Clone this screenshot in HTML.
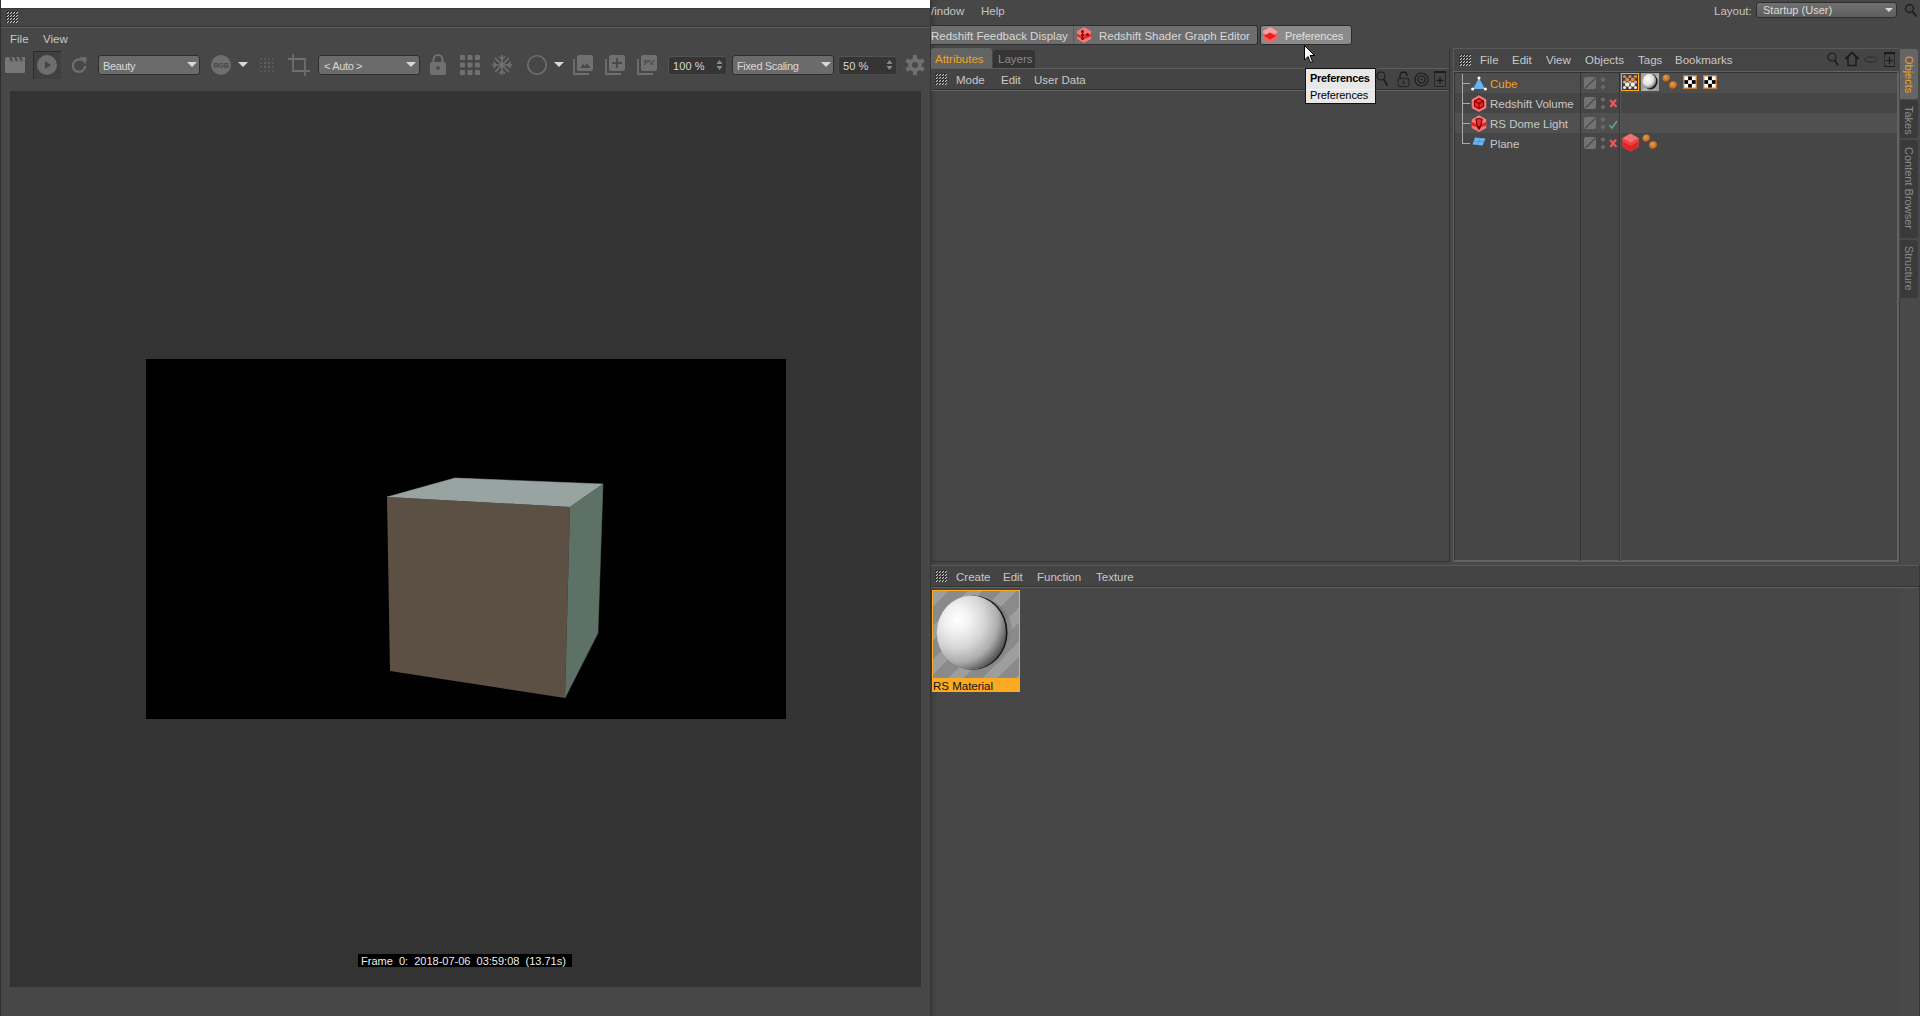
<!DOCTYPE html>
<html><head><meta charset="utf-8">
<style>
*{margin:0;padding:0;box-sizing:border-box}
html,body{width:1920px;height:1016px;overflow:hidden;background:#484848;font-family:"Liberation Sans",sans-serif;font-size:11px;color:#c8c8c8}
.a{position:absolute}
.t{position:absolute;white-space:nowrap;line-height:14px;font-size:11.5px;letter-spacing:0}
.s{font-size:11px;line-height:13px;letter-spacing:-0.35px}

.hl{position:absolute;height:1px}
.vl{position:absolute;width:1px}
.dd{position:absolute;border-radius:3px;background:#6b6b6b;border:1px solid #2e2e2e}
.tri{position:absolute;width:0;height:0;border-left:5px solid transparent;border-right:5px solid transparent;border-top:5px solid #d8d8d8}
.fld{position:absolute;border-radius:3px;background:#353535;border:1px solid #525252;border-right-color:#4a4a4a;border-bottom-color:#4c4c4c}
svg{position:absolute;overflow:visible}
</style></head><body>
<svg width="0" height="0" style="position:absolute"><defs><pattern id="gp" width="3" height="3" patternUnits="userSpaceOnUse"><rect x="1" y="0" width="1" height="1" fill="#1c1c1c"/><rect x="0" y="1" width="1" height="1" fill="#1c1c1c"/><rect x="1" y="1" width="1" height="1" fill="#5a5a5a"/><rect x="2" y="1" width="1" height="1" fill="#c8c8c8"/><rect x="1" y="2" width="1" height="1" fill="#c8c8c8"/></pattern></defs></svg>

<!-- ============ RIGHT MAIN WINDOW ============ -->
<div class="a" style="left:930px;top:0;width:990px;height:1016px;background:#474747"></div>
<div class="a" style="left:931px;top:0;width:6px;height:1016px;background:linear-gradient(90deg,#3b3b3b,#474747)"></div>
<div class="vl" style="left:930px;top:0;height:1016px;background:#3c3c3c"></div>
<!-- menu row -->
<div class="t" style="left:931px;top:4px;color:#c4c4c4">/indow</div>
<div class="t" style="left:981px;top:4px;color:#c4c4c4">Help</div>
<div class="t" style="left:1714px;top:4px;color:#c4c4c4">Layout:</div>
<div class="a" style="left:1756px;top:2px;width:141px;height:16px;border-radius:3px;background:linear-gradient(#707070,#5e5e5e);border:1px solid #2e2e2e"></div>
<div class="t s" style="left:1763px;top:4px;color:#dcdcdc;letter-spacing:0">Startup (User)</div>
<div class="tri" style="left:1885px;top:8px;border-left-width:4px;border-right-width:4px;border-top-width:4px"></div>
<svg style="left:1904px;top:3px" width="14" height="15" viewBox="0 0 14 15"><circle cx="5.5" cy="5.5" r="4" fill="none" stroke="#1c1c1c" stroke-width="1.3"/><path d="M8.5 8.5 L12.5 13.5" stroke="#1c1c1c" stroke-width="1.8"/></svg>

<!-- plugin toolbar -->
<div class="a" style="left:931px;top:25px;width:327px;height:20px;background:#6d6d6d;border-radius:0 3px 3px 0;border:1px solid #2e2e2e;border-left:0"></div>
<div class="vl" style="left:1073px;top:26px;height:18px;background:#5a5a5a"></div>
<div class="t" style="left:931px;top:29px;color:#d8d8d8">Redshift Feedback Display</div>
<svg style="left:1077px;top:27px" width="14" height="16" viewBox="0 0 14 16"><path d="M7 0 L14 4 V12 L7 16 L0 12 V4 Z" fill="#f07a7a"/><path d="M0 7 L7 9.5 L14 7 V9.5 L7 12 L0 9.5Z" fill="#e82424"/><g fill="#8a0000"><circle cx="5.5" cy="4.5" r="1.5"/><circle cx="5.5" cy="8" r="1.5"/><circle cx="10.5" cy="7.5" r="1.5"/><circle cx="5.5" cy="11.5" r="1.5"/></g><path d="M5.5 4.5 V11.5 M5.5 8 H10.5" stroke="#a00000" stroke-width="0.9"/></svg>
<div class="t" style="left:1099px;top:29px;color:#d8d8d8">Redshift Shader Graph Editor</div>
<div class="a" style="left:1260px;top:25px;width:92px;height:20px;background:#8a8a8a;border-radius:3px;border:1px solid #2a2a2a"></div>
<svg style="left:1263px;top:27px" width="14" height="16" viewBox="0 0 14 16"><path d="M7 0 L14 4 V12 L7 16 L0 12 V4 Z" fill="#ee6464"/><path d="M7 0 L14 4 V6 L7 9 L0 6 V4Z" fill="#f5a0a0"/><path d="M1 9 L7 5.5 L13 9 L7 12.5Z" fill="#ec1c1c"/></svg>
<div class="t s" style="left:1285px;top:30px;color:#e0e0e0;letter-spacing:-0.1px">Preferences</div>

<!-- Attributes panel -->
<div class="a" style="left:931px;top:48px;width:61px;height:21px;background:#636363;border-radius:3px 3px 0 0"></div>
<div class="t" style="left:935px;top:52px;color:#f0a21e">Attributes</div>
<div class="a" style="left:993px;top:50px;width:42px;height:19px;background:#343434;border-radius:3px 3px 0 0"></div>
<div class="t" style="left:998px;top:52px;color:#8a8a8a">Layers</div>
<div class="hl" style="left:931px;top:68px;width:518px;background:#5c5c5c"></div>
<div class="a" style="left:931px;top:69px;width:518px;height:20px;background:#444"></div>
<div class="hl" style="left:931px;top:89px;width:518px;background:#333"></div>
<div class="hl" style="left:931px;top:90px;width:518px;background:#616161"></div>
<svg class="grip" style="left:935px;top:73px" width="12" height="12"><rect width="12" height="12" fill="url(#gp)"/></svg>
<div class="t" style="left:956px;top:73px">Mode</div>
<div class="t" style="left:1001px;top:73px">Edit</div>
<div class="t" style="left:1034px;top:73px">User Data</div>
<div class="vl" style="left:1449px;top:48px;height:514px;background:#333"></div>
<div class="hl" style="left:931px;top:561px;width:519px;background:#333"></div>
<!-- attr icons -->
<svg style="left:1376px;top:71px" width="12" height="16" viewBox="0 0 12 16"><circle cx="5" cy="5" r="4" fill="none" stroke="#1c1c1c" stroke-width="1.2"/><path d="M7.5 8 L11.5 14.5" stroke="#1c1c1c" stroke-width="1.6"/></svg>
<svg style="left:1397px;top:71px" width="13" height="16" viewBox="0 0 13 16"><path d="M3 7 V4.5 A3.5 3.5 0 0 1 10 4.5 V5" fill="none" stroke="#1c1c1c" stroke-width="1.5"/><rect x="1" y="7.5" width="11" height="8" rx="1.5" fill="none" stroke="#2a2a2a" stroke-width="1.3"/><path d="M6.5 10 v3" stroke="#1c1c1c" stroke-width="1.5"/></svg>
<svg style="left:1414px;top:72px" width="15" height="15" viewBox="0 0 15 15"><circle cx="7.5" cy="7.5" r="6.5" fill="none" stroke="#1c1c1c" stroke-width="1.2"/><circle cx="7.5" cy="7.5" r="3.5" fill="none" stroke="#1c1c1c" stroke-width="1.2"/><circle cx="7.5" cy="7.5" r="1" fill="#1c1c1c"/></svg>
<svg style="left:1434px;top:71px" width="12" height="16" viewBox="0 0 12 16"><rect x="0.5" y="0.5" width="11" height="15" fill="none" stroke="#2a2a2a" stroke-width="1"/><rect x="0" y="0" width="12" height="2" fill="#1c1c1c"/><path d="M6 6 v7 M2.5 9.5 h7" stroke="#1c1c1c" stroke-width="1.3"/></svg>

<!-- Object manager -->
<div class="a" style="left:1453px;top:48px;width:446px;height:24px;background:#454545;border-top:1px solid #5a5a5a;border-left:1px solid #5a5a5a"></div>
<svg class="grip" style="left:1459px;top:54px" width="12" height="12"><rect width="12" height="12" fill="url(#gp)"/></svg>
<div class="t" style="left:1480px;top:53px">File</div>
<div class="t" style="left:1512px;top:53px">Edit</div>
<div class="t" style="left:1546px;top:53px">View</div>
<div class="t" style="left:1585px;top:53px">Objects</div>
<div class="t" style="left:1638px;top:53px">Tags</div>
<div class="t" style="left:1675px;top:53px">Bookmarks</div>
<svg style="left:1827px;top:52px" width="12" height="15" viewBox="0 0 12 15"><circle cx="5" cy="5" r="4" fill="none" stroke="#1c1c1c" stroke-width="1.2"/><path d="M7.5 8 L11 13.5" stroke="#1c1c1c" stroke-width="1.6"/></svg>
<svg style="left:1844px;top:51px" width="16" height="16" viewBox="0 0 16 16"><path d="M1.5 8 L8 1.5 L14.5 8" fill="none" stroke="#1c1c1c" stroke-width="1.8"/><path d="M4 6 V14.5 H12 V6" fill="none" stroke="#1c1c1c" stroke-width="1.5"/></svg>
<svg style="left:1864px;top:56px" width="14" height="7" viewBox="0 0 14 7"><ellipse cx="7" cy="3.5" rx="6.2" ry="2.6" fill="none" stroke="#2a2a2a" stroke-width="1"/></svg>
<svg style="left:1884px;top:52px" width="11" height="15" viewBox="0 0 11 15"><rect x="0.5" y="0.5" width="10" height="14" fill="none" stroke="#2e2e2e" stroke-width="1"/><rect x="0" y="0" width="11" height="2.2" fill="#1c1c1c"/><rect x="0" y="14" width="11" height="1" fill="#1c1c1c"/><path d="M5.5 5 V12 M2 8.5 H9" stroke="#1c1c1c" stroke-width="1.2"/></svg>
<!-- list frame -->
<div class="a" style="left:1453px;top:71px;width:446px;height:491px;background:#626262"></div>
<div class="a" style="left:1454px;top:72px;width:444px;height:489px;background:#464646;border:1px solid #626262;border-top-color:#333;border-left-color:#333"></div>
<div class="a" style="left:1455px;top:73px;width:442px;height:20px;background:#4e4e4e"></div>
<div class="a" style="left:1455px;top:113px;width:442px;height:20px;background:#505050"></div>
<div class="vl" style="left:1580px;top:73px;height:488px;background:#333"></div>
<div class="vl" style="left:1619px;top:73px;height:488px;background:#333"></div>
<div class="vl" style="left:1620px;top:73px;height:488px;background:#585858"></div>
<!-- tree -->
<div class="vl" style="left:1462px;top:74px;height:70px;background:#a8a8a8"></div>
<div class="hl" style="left:1462px;top:83px;width:8px;background:#a8a8a8"></div>
<div class="hl" style="left:1462px;top:103px;width:8px;background:#a8a8a8"></div>
<div class="hl" style="left:1462px;top:123px;width:8px;background:#a8a8a8"></div>
<div class="hl" style="left:1462px;top:143px;width:8px;background:#a8a8a8"></div>
<svg style="left:1471px;top:76px" width="16" height="15" viewBox="0 0 16 15"><path d="M8 2 L14 13 H2 Z" fill="#6ab4f0"/><circle cx="8" cy="2" r="1.5" fill="#fff"/><circle cx="1.6" cy="13" r="1.5" fill="#fff"/><circle cx="14.4" cy="13" r="1.5" fill="#fff"/></svg>
<div class="t" style="left:1490px;top:77px;color:#f0a21e">Cube</div>
<svg style="left:1471px;top:95px" width="16" height="18" viewBox="0 0 16 18"><path d="M8 0.3 L15.3 4.4 V12.9 L8 17 L0.7 12.9 V4.4 Z" fill="#f27a7a"/><path d="M8 3.5 L12.5 6 V11.2 L8 13.8 L3.5 11.2 V6 Z" fill="#e42a2a" stroke="#8a0000" stroke-width="1.2" stroke-linejoin="round"/><path d="M3.8 6.2 L8 8.5 L12.2 6.2 M8 8.5 V13.5" fill="none" stroke="#8a0000" stroke-width="1.2"/></svg>
<div class="t" style="left:1490px;top:97px;color:#c8c8c8">Redshift Volume</div>
<svg style="left:1471px;top:115px" width="16" height="18" viewBox="0 0 16 18"><path d="M8 0.3 L15.3 4.4 V12.9 L8 17 L0.7 12.9 V4.4 Z" fill="#f27a7a"/><path d="M0.7 7 L8 9.5 L15.3 7 V10.5 L8 13 L0.7 10.5Z" fill="#e82222"/><path d="M5 4.5 Q8 2.5 11 4.5 Q10.5 9 8.5 14 L7.5 14 Q5.5 9 5 4.5Z" fill="#e43030" stroke="#7a0000" stroke-width="1.2"/><path d="M7 11 L9 11 L8.5 14.5 L7.5 14.5Z" fill="#6a0000"/></svg>
<div class="t" style="left:1490px;top:117px;color:#c8c8c8">RS Dome Light</div>
<svg style="left:1472px;top:137px" width="14" height="9" viewBox="0 0 14 9"><path d="M3 0.5 L13.5 1.5 L10.5 8.5 L0.5 7.5 Z" fill="#6ab4f0"/><path d="M1.8 4 L12 5 M8 1 L5.5 8" stroke="#4a8ac8" stroke-width="0.7"/></svg>
<div class="t" style="left:1490px;top:137px;color:#c8c8c8">Plane</div>
<!-- layer/vis column -->
<svg style="left:1584px;top:77px" width="34" height="74" viewBox="0 0 34 74">
<g fill="#727272">
<rect x="0" y="0" width="12" height="12" rx="2"/><rect x="0" y="20" width="12" height="12" rx="2"/><rect x="0" y="40" width="12" height="12" rx="2"/><rect x="0" y="60" width="12" height="12" rx="2"/>
</g>
<g fill="#6a6a6a">
<path d="M19 0 l2.6 2.6 l-2.6 2.6 l-2.6 -2.6z M19 7.5 l2.6 2.6 l-2.6 2.6 l-2.6 -2.6z M19 20 l2.6 2.6 l-2.6 2.6 l-2.6 -2.6z M19 27.5 l2.6 2.6 l-2.6 2.6 l-2.6 -2.6z M19 40 l2.6 2.6 l-2.6 2.6 l-2.6 -2.6z M19 47.5 l2.6 2.6 l-2.6 2.6 l-2.6 -2.6z M19 60 l2.6 2.6 l-2.6 2.6 l-2.6 -2.6z M19 67.5 l2.6 2.6 l-2.6 2.6 l-2.6 -2.6z"/>
</g>
<g stroke="#4c4c4c" stroke-width="1.3"><path d="M1.5 11 L11 1.5 M1.5 31 L11 21.5 M1.5 51 L11 41.5 M1.5 71 L11 61.5"/></g>
<g stroke="#e85a5a" stroke-width="2.2"><path d="M26 23 L32.5 30 M32 22.5 L26.5 30 M26 63 L32.5 70 M32 62.5 L26.5 70"/></g>
<path d="M25.5 48 L28 51 L33 44" fill="none" stroke="#5aa890" stroke-width="1.5"/>
</svg>
<!-- tags -->
<div class="a" style="left:1621px;top:73px;width:18px;height:18px;border:1px solid #ffa810;background:#3a3f4c"></div>
<svg style="left:1622px;top:74px" width="16" height="16" viewBox="0 0 16 16"><g fill="#e88a3a"><circle cx="2.5" cy="2.5" r="1.6"/><circle cx="8" cy="2.5" r="1.6"/><circle cx="13.5" cy="2.5" r="1.6"/><circle cx="5.2" cy="5.5" r="2"/><circle cx="10.8" cy="5.5" r="2"/></g><g fill="#e8b090"><circle cx="2.5" cy="8" r="1.5"/><circle cx="8" cy="8" r="1.5"/><circle cx="13.5" cy="8" r="1.5"/></g><g fill="#f0eee0"><circle cx="5.2" cy="10.5" r="2.2"/><circle cx="10.8" cy="10.5" r="2.2"/><circle cx="2.5" cy="13.5" r="1.5"/><circle cx="8" cy="13.5" r="1.5"/><circle cx="13.5" cy="13.5" r="1.5"/></g></svg>
<svg style="left:1641px;top:73px" width="18" height="18" viewBox="0 0 18 18"><defs><radialGradient id="tsph" cx="0.35" cy="0.35" r="0.7"><stop offset="0" stop-color="#fff"/><stop offset="0.6" stop-color="#ddd"/><stop offset="0.85" stop-color="#888"/><stop offset="1" stop-color="#111"/></radialGradient></defs><rect width="18" height="18" fill="#a0a0a0"/><path d="M0 18 L18 0 V6 L6 18Z" fill="#b4b4b4"/><ellipse cx="9.3" cy="8.6" rx="7.3" ry="7.8" fill="#111"/><ellipse cx="8.6" cy="8.3" rx="7" ry="7.5" fill="url(#tsph)"/></svg>
<svg style="left:1662px;top:74px" width="16" height="16" viewBox="0 0 16 16"><defs><radialGradient id="ball" cx="0.4" cy="0.35" r="0.65"><stop offset="0" stop-color="#e8a050"/><stop offset="0.7" stop-color="#c07028"/><stop offset="1" stop-color="#6a3a10"/></radialGradient></defs><circle cx="4.5" cy="4.4" r="3.9" fill="url(#ball)"/><circle cx="11.3" cy="11.4" r="4.1" fill="url(#ball)"/></svg>
<svg style="left:1683px;top:75px" width="14" height="14" viewBox="0 0 15 15"><rect width="15" height="15" fill="#c87a36"/><rect x="1.5" y="1.5" width="12" height="12" fill="#fff"/><g fill="#000"><rect x="5.5" y="1.5" width="4" height="4"/><rect x="1.5" y="5.5" width="4" height="4"/><rect x="9.5" y="5.5" width="4" height="4"/><rect x="5.5" y="9.5" width="4" height="4"/></g></svg>
<svg style="left:1703px;top:75px" width="14" height="14" viewBox="0 0 15 15"><rect width="15" height="15" fill="#c87a36"/><rect x="1.5" y="1.5" width="12" height="12" fill="#fff"/><g fill="#000"><rect x="5.5" y="1.5" width="4" height="4"/><rect x="1.5" y="5.5" width="4" height="4"/><rect x="9.5" y="5.5" width="4" height="4"/><rect x="5.5" y="9.5" width="4" height="4"/></g></svg>
<svg style="left:1622px;top:133px" width="17" height="19" viewBox="0 0 17 19"><path d="M8.5 0.5 L16.5 5 V14 L8.5 18.5 L0.5 14 V5 Z" fill="#f07070"/><path d="M0.5 8 L8.5 12.5 L16.5 8 V14 L8.5 18.5 L0.5 14Z" fill="#e02424"/><path d="M0.5 5 L8.5 9.5 L16.5 5 V8 L8.5 12.5 L0.5 8Z" fill="#f04040"/></svg>
<svg style="left:1642px;top:134px" width="16" height="16" viewBox="0 0 16 16"><circle cx="4.5" cy="4.4" r="3.9" fill="url(#ball)"/><circle cx="11.3" cy="11.4" r="4.1" fill="url(#ball)"/></svg>

<!-- tabs -->
<div class="a" style="left:1899px;top:48px;width:21px;height:968px;background:#494949"></div>
<div class="a" style="left:1900px;top:49px;width:18px;height:50px;background:#656565;border-radius:0 3px 3px 0"></div>
<div class="a" style="left:1900px;top:100px;width:18px;height:38px;background:#3a3a3a;border-radius:0 3px 3px 0"></div>
<div class="a" style="left:1900px;top:140px;width:18px;height:98px;background:#3a3a3a;border-radius:0 3px 3px 0"></div>
<div class="a" style="left:1900px;top:240px;width:18px;height:58px;background:#3a3a3a;border-radius:0 3px 3px 0"></div>
<div class="t" style="left:1902px;top:56px;writing-mode:vertical-rl;color:#f0a21e;font-size:11px;line-height:13px">Objects</div>
<div class="t" style="left:1902px;top:106px;writing-mode:vertical-rl;color:#8c8c8c;font-size:11px;line-height:13px">Takes</div>
<div class="t" style="left:1902px;top:147px;writing-mode:vertical-rl;color:#8c8c8c;font-size:11px;line-height:13px">Content Browser</div>
<div class="t" style="left:1902px;top:246px;writing-mode:vertical-rl;color:#8c8c8c;font-size:11px;line-height:13px">Structure</div>

<div class="vl" style="left:1899px;top:298px;height:264px;background:#383838"></div>
<!-- Material manager -->
<div class="hl" style="left:931px;top:565px;width:989px;background:#5a5a5a"></div>
<div class="a" style="left:931px;top:566px;width:989px;height:20px;background:#444"></div>
<div class="hl" style="left:931px;top:586px;width:989px;background:#333"></div>
<div class="hl" style="left:931px;top:587px;width:989px;background:#616161"></div>
<svg class="grip" style="left:935px;top:570px" width="12" height="12"><rect width="12" height="12" fill="url(#gp)"/></svg>
<div class="t" style="left:956px;top:570px">Create</div>
<div class="t" style="left:1003px;top:570px">Edit</div>
<div class="t" style="left:1037px;top:570px">Function</div>
<div class="t" style="left:1096px;top:570px">Texture</div>
<div class="a" style="left:932px;top:590px;width:88px;height:102px;background:#fcaa22"></div>
<svg style="left:933px;top:591px" width="86" height="87" viewBox="933 591 86 87">
<defs>
<linearGradient id="stp" x1="933" y1="591" x2="950" y2="608" gradientUnits="userSpaceOnUse" spreadMethod="repeat">
<stop offset="0" stop-color="#9e9e9e"/><stop offset="0.45" stop-color="#9e9e9e"/><stop offset="0.45" stop-color="#8a8a8a"/><stop offset="1" stop-color="#8a8a8a"/>
</linearGradient>
<radialGradient id="sph" cx="0.3" cy="0.32" r="0.78">
<stop offset="0" stop-color="#ffffff"/><stop offset="0.22" stop-color="#f2f2f2"/><stop offset="0.5" stop-color="#d6d6d6"/><stop offset="0.75" stop-color="#acacac"/><stop offset="0.9" stop-color="#6e6e6e"/><stop offset="1" stop-color="#444"/>
</radialGradient>
<radialGradient id="shd" cx="0.35" cy="0.4" r="0.7">
<stop offset="0.6" stop-color="#4a4a4a"/><stop offset="1" stop-color="#9a9a9a"/>
</radialGradient>
</defs>
<rect x="933" y="591" width="86" height="87" fill="url(#stp)"/>
<ellipse cx="976" cy="634" rx="37" ry="37" fill="url(#shd)" opacity="0.6"/>
<ellipse cx="973" cy="632.5" rx="34.5" ry="37" fill="#111"/>
<ellipse cx="971.4" cy="632.6" rx="34.6" ry="37" fill="url(#sph)"/>
</svg>
<div class="t" style="left:933px;top:679px;color:#111">RS Material</div>

<div class="vl" style="left:1919px;top:565px;height:451px;background:#353535"></div>
<!-- tooltip + cursor -->
<div class="a" style="left:1305px;top:68px;width:71px;height:36px;background:#e8e8e8;border:1px solid #111"></div>
<div class="t" style="left:1310px;top:71px;color:#000;font-weight:bold;font-size:11px;letter-spacing:-0.3px">Preferences</div>
<div class="hl" style="left:1306px;top:89px;width:69px;background:#f4f4f4"></div>
<div class="t" style="left:1310px;top:88px;color:#000;font-size:11px;letter-spacing:-0.1px">Preferences</div>
<svg style="left:1304px;top:45px" width="12" height="19" viewBox="0 0 12 19"><path d="M0.5 0.5 V15 L4 11.5 L6.5 17.5 L8.5 16.5 L6 10.5 L10.5 10.5 Z" fill="#fff" stroke="#000" stroke-width="1"/></svg>

<!-- ============ LEFT RENDER WINDOW ============ -->
<div class="a" style="left:0;top:0;width:930px;height:1016px;background:#474747"></div>
<div class="vl" style="left:0;top:0;height:1016px;background:#2e2e2e;z-index:2"></div>
<div class="a" style="left:0;top:0;width:930px;height:8px;background:#fff"></div>
<div class="vl" style="left:930px;top:0;height:1016px;background:#353535"></div>
<div class="a" style="left:1px;top:8px;width:928px;height:19px;background:#454545"></div>
<div class="hl" style="left:0;top:8px;width:930px;background:#3a3a3a"></div>
<div class="hl" style="left:1px;top:26px;width:928px;background:#383838"></div>
<div class="hl" style="left:1px;top:27px;width:928px;background:#5c5c5c"></div>
<svg class="grip" style="left:6px;top:11px" width="12" height="12"><rect width="12" height="12" fill="url(#gp)"/></svg>
<div class="t" style="left:10px;top:32px">File</div>
<div class="t" style="left:43px;top:32px">View</div>

<!-- toolbar -->
<svg style="left:5px;top:57px" width="20" height="16" viewBox="0 0 20 16"><path d="M0 2 a2 2 0 0 1 2 -2 H20 V14.5 a1.5 1.5 0 0 1 -1.5 1.5 H1.5 a1.5 1.5 0 0 1 -1.5 -1.5Z" fill="#777"/><path d="M5 -0.5 L7 4.5 M10 -0.5 L12 4.5 M15 -0.5 L17 4.5" stroke="#474747" stroke-width="2.2"/><rect x="3" y="3.5" width="17" height="0.8" fill="#6a6a6a"/></svg>
<svg style="left:33px;top:51px" width="28" height="28" viewBox="0 0 28 28"><defs><pattern id="chk" width="2" height="2" patternUnits="userSpaceOnUse"><rect width="2" height="2" fill="#454545"/><rect width="1" height="1" fill="#3b3b3b"/><rect x="1" y="1" width="1" height="1" fill="#3b3b3b"/></pattern></defs><rect width="28" height="28" fill="url(#chk)"/><rect width="28" height="1" fill="#2a2a2a"/><rect width="1" height="28" fill="#2a2a2a"/></svg>
<svg style="left:37px;top:55px" width="20" height="20" viewBox="0 0 20 20"><circle cx="10" cy="10" r="10" fill="#6e6e6e"/><path d="M8 6 L14 10 L8 14Z" fill="#454545"/></svg>
<svg style="left:71px;top:56px" width="17" height="18" viewBox="0 0 17 18"><path d="M14.2 10 A6.2 6.2 0 1 1 11 4.2" fill="none" stroke="#6e6e6e" stroke-width="2.3"/><path d="M8.5 0.8 L16 1.5 L14.5 8.5Z" fill="#6e6e6e"/></svg>
<div class="dd" style="left:98px;top:55px;width:102px;height:20px"></div>
<div class="t s" style="left:103px;top:60px;color:#d8d8d8">Beauty</div>
<div class="tri" style="left:187px;top:62px"></div>
<svg style="left:211px;top:55px" width="20" height="20" viewBox="0 0 20 20"><circle cx="10" cy="10" r="10" fill="#6e6e6e"/><text x="10" y="13" text-anchor="middle" font-family="Liberation Sans" font-size="7.2" font-weight="bold" letter-spacing="-0.3" fill="#484848">RGB</text></svg>
<div class="tri" style="left:238px;top:62px"></div>
<svg style="left:258px;top:55px" width="19" height="20" viewBox="0 0 19 20"><g fill="#5e5e5e"><circle cx="3" cy="4" r="0.9"/><circle cx="7" cy="4" r="0.9"/><circle cx="11" cy="4" r="0.9"/><circle cx="15" cy="4" r="0.9"/><circle cx="3" cy="8" r="1.1"/><circle cx="7" cy="8" r="1.3"/><circle cx="11" cy="8" r="1.3"/><circle cx="15" cy="8" r="1.1"/><circle cx="3" cy="12" r="1.1"/><circle cx="7" cy="12" r="1.3"/><circle cx="11" cy="12" r="1.3"/><circle cx="15" cy="12" r="1.1"/><circle cx="3" cy="16" r="0.9"/><circle cx="7" cy="16" r="0.9"/><circle cx="11" cy="16" r="0.9"/><circle cx="15" cy="16" r="0.9"/></g></svg>
<svg style="left:288px;top:54px" width="22" height="22" viewBox="0 0 22 22"><path d="M5 0 V17 H22 M0 5 H17 V22" fill="none" stroke="#6e6e6e" stroke-width="1.8"/></svg>
<div class="dd" style="left:318px;top:55px;width:102px;height:20px"></div>
<div class="t s" style="left:324px;top:60px;color:#d8d8d8">&lt; Auto &gt;</div>
<div class="tri" style="left:406px;top:62px"></div>
<svg style="left:430px;top:54px" width="16" height="21" viewBox="0 0 16 21"><path d="M3.5 9 V5.5 A4.5 4.5 0 0 1 12.5 5.5 V9" fill="none" stroke="#707070" stroke-width="2"/><rect x="0" y="8" width="16" height="13" rx="2" fill="#707070"/><circle cx="8" cy="14" r="1.8" fill="#494949"/></svg>
<svg style="left:460px;top:55px" width="20" height="20" viewBox="0 0 20 20"><g fill="#707070"><rect x="0" y="0" width="5" height="5" rx="1"/><rect x="7.5" y="0" width="5" height="5" rx="1"/><rect x="15" y="0" width="5" height="5" rx="1"/><rect x="0" y="7.5" width="5" height="5" rx="1"/><rect x="7.5" y="7.5" width="5" height="5" rx="1"/><rect x="15" y="7.5" width="5" height="5" rx="1"/><rect x="0" y="15" width="5" height="5" rx="1"/><rect x="7.5" y="15" width="5" height="5" rx="1"/><rect x="15" y="15" width="5" height="5" rx="1"/></g></svg>
<svg style="left:492px;top:55px" width="20" height="20" viewBox="0 0 20 20"><g stroke="#707070" stroke-width="1.6" fill="none"><path d="M10 0 V20 M0 10 H20 M3 3 L17 17 M17 3 L3 17"/><path d="M7 1.5 L10 4 L13 1.5 M7 18.5 L10 16 L13 18.5 M1.5 7 L4 10 L1.5 13 M18.5 7 L16 10 L18.5 13"/></g></svg>
<svg style="left:527px;top:55px" width="20" height="20" viewBox="0 0 20 20"><circle cx="10" cy="10" r="9.2" fill="none" stroke="#707070" stroke-width="1.6"/></svg>
<div class="tri" style="left:554px;top:62px"></div>
<svg style="left:573px;top:55px" width="20" height="20" viewBox="0 0 20 20"><path d="M1 4 V19 H16" fill="none" stroke="#707070" stroke-width="1.8"/><rect x="4" y="0" width="16" height="16" rx="2" fill="#707070"/><path d="M7 13 L10 9 L12 11 L14 8 L17.5 13Z" fill="#494949"/></svg>
<svg style="left:605px;top:55px" width="20" height="20" viewBox="0 0 20 20"><path d="M1 4 V19 H16" fill="none" stroke="#707070" stroke-width="1.8"/><rect x="4" y="0" width="16" height="16" rx="2" fill="#707070"/><path d="M12 3 V13 M7 8 H17" stroke="#494949" stroke-width="2"/></svg>
<svg style="left:637px;top:55px" width="20" height="20" viewBox="0 0 20 20"><path d="M1 4 V19 H16" fill="none" stroke="#707070" stroke-width="1.8"/><rect x="4" y="0" width="16" height="16" rx="2" fill="#707070"/><text x="12" y="10" text-anchor="middle" font-family="Liberation Sans" font-size="8" font-weight="bold" fill="#494949">PV</text></svg>
<div class="fld" style="left:668px;top:56px;width:59px;height:19px"></div>
<div class="t s" style="left:673px;top:60px;color:#d8d8d8;letter-spacing:0.1px">100 %</div>
<svg style="left:716px;top:59px" width="7" height="12" viewBox="0 0 7 12"><path d="M0.5 5 L3.5 1 L6.5 5Z M0.5 7 L3.5 11 L6.5 7Z" fill="#8a8a8a"/></svg>
<div class="dd" style="left:732px;top:55px;width:102px;height:20px"></div>
<div class="t s" style="left:737px;top:60px;color:#d8d8d8">Fixed Scaling</div>
<div class="tri" style="left:821px;top:62px"></div>
<div class="fld" style="left:838px;top:56px;width:59px;height:19px"></div>
<div class="t s" style="left:843px;top:60px;color:#d8d8d8;letter-spacing:0.1px">50 %</div>
<svg style="left:886px;top:59px" width="7" height="12" viewBox="0 0 7 12"><path d="M0.5 5 L3.5 1 L6.5 5Z M0.5 7 L3.5 11 L6.5 7Z" fill="#8a8a8a"/></svg>
<svg style="left:905px;top:55px" width="20" height="20" viewBox="0 0 20 20"><g fill="#707070"><circle cx="10" cy="10" r="7"/><rect x="8" y="0" width="4" height="20"/><rect x="8" y="0" width="4" height="20" transform="rotate(60 10 10)"/><rect x="8" y="0" width="4" height="20" transform="rotate(120 10 10)"/></g><circle cx="10" cy="10" r="3" fill="#494949"/></svg>

<!-- image area -->
<div class="a" style="left:10px;top:91px;width:911px;height:896px;background:#333"></div>
<div class="a" style="left:146px;top:359px;width:640px;height:360px;background:#000"></div>
<svg style="left:146px;top:359px" width="640" height="360" viewBox="146 359 640 360">
<path d="M387 497 L455 478 L603 484 L570 507 Z" fill="#98a4a1" stroke="#98a4a1" stroke-width="0.5"/>
<path d="M570 507 L603 484 L598 633 L565 698 Z" fill="#5d7166" stroke="#5d7166" stroke-width="0.5"/>
<path d="M387 497 L570 507 L565 698 L390 671 Z" fill="#5c5044"/>
</svg>
<div class="a" style="left:358px;top:954px;width:214px;height:13px;background:#000"></div>
<div class="t" style="left:361px;top:954px;color:#eee;font-size:11px;letter-spacing:0">Frame&nbsp; 0:&nbsp; 2018-07-06&nbsp; 03:59:08&nbsp; (13.71s)</div>
</body></html>
